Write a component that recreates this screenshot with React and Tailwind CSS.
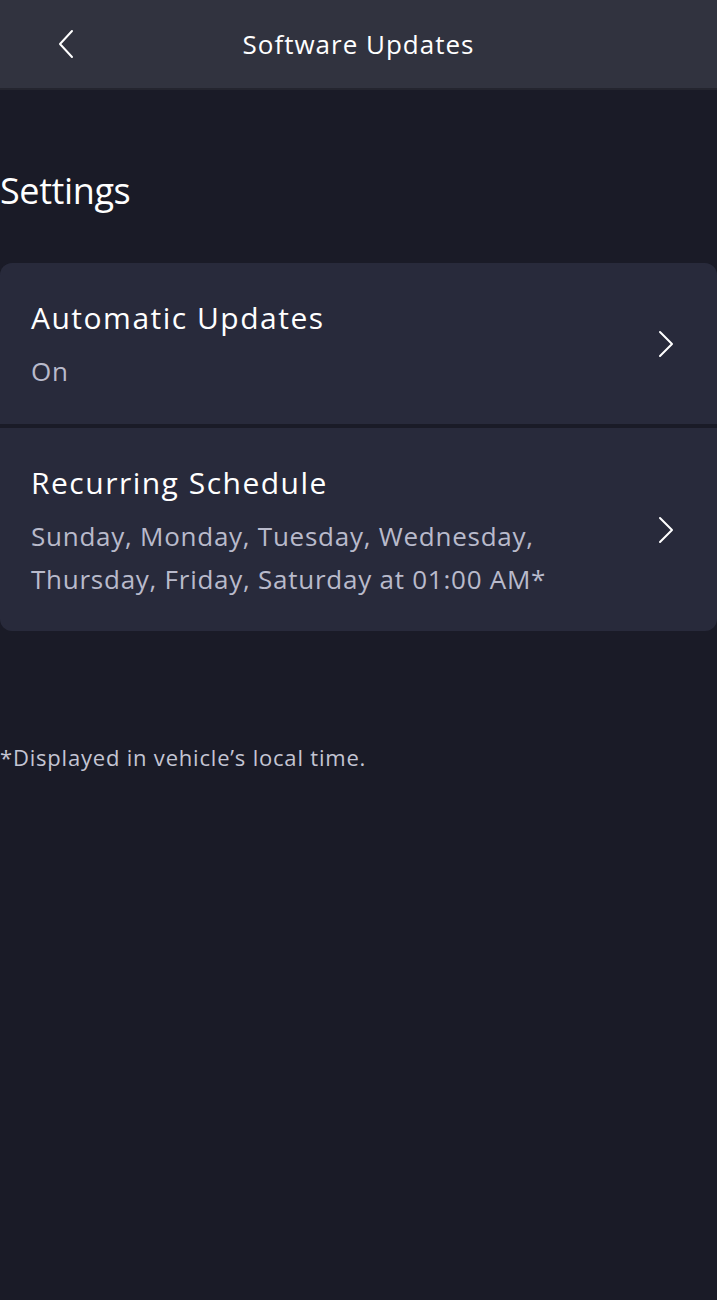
export default function App() {
    const rows = [
        { title: "Automatic Updates", sub: ["On"] },
        {
            title: "Recurring Schedule",
            sub: ["Sunday, Monday, Tuesday, Wednesday,", "Thursday, Friday, Saturday at 01:00 AM*"],
        },
    ];

    return (
        <div
            className="min-h-[1300px] w-[717px] bg-[#1a1b27] text-white"
            style={{ fontFamily: '"Open Sans", "Noto Sans", sans-serif' }}
        >
            {/* Header */}
            <div className="relative flex h-[90px] items-center justify-center bg-[#31333f] border-b-2 border-[#24252f]">
                <button className="absolute left-[50px] top-[26px] flex h-[36px] w-[32px] items-center justify-center">
                    <svg width="18" height="30" viewBox="0 0 18 30" fill="none">
                        <path d="M15 2 L3 15 L15 28" stroke="white" strokeWidth="2" strokeLinecap="round" strokeLinejoin="round" />
                    </svg>
                </button>
                <h1 className="text-[26px] font-normal tracking-[1px]">Software Updates</h1>
            </div>

            {/* Section title */}
            <h2 className="mt-[77px] text-[36px] leading-[48px] tracking-[-0.4px]">Settings</h2>

            {/* Settings card */}
            <div className="mt-[48px] flex flex-col gap-[4px] overflow-hidden rounded-[12px] bg-[#1a1b27]">
                {rows.map((row, i) => (
                    <div
                        key={row.title}
                        className={`flex items-center justify-between bg-[#282a3b] pl-[31px] pr-[42px] ${i === 0 ? "h-[161px]" : "h-[203px]"}`}
                    >
                        <div className="flex flex-col pt-[4px]">
                            <p className="text-[30px] leading-[40px] tracking-[1.5px]">{row.title}</p>
                            <div className="mt-[12px] text-[26px] leading-[43px] text-[#b9bacb] tracking-[0.75px]">
                                {row.sub.map((s) => (
                                    <p key={s}>{s}</p>
                                ))}
                            </div>
                        </div>
                        <svg width="18" height="28" viewBox="0 0 18 28" fill="none" className="shrink-0">
                            <path d="M3 2 L15 14 L3 26" stroke="white" strokeWidth="2" strokeLinecap="round" strokeLinejoin="round" />
                        </svg>
                    </div>
                ))}
            </div>

            {/* Footnote */}
            <p className="mt-[111px] text-[22px] leading-[30px] text-[#c4c5d3] tracking-[0.8px]">
                *Displayed in vehicle’s local time.
            </p>
        </div>
    );
}
